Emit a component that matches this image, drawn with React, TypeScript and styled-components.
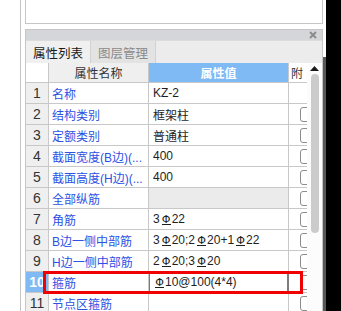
import { createGlobalStyle, styled } from 'styled-components'

const GlobalStyle = createGlobalStyle`
  html, body {
    margin: 0;
    padding: 0;
    background: #ffffff;
  }
  body {
    font-family: "Liberation Sans", "Noto Sans CJK SC", sans-serif;
    font-size: 12px;
  }
`

type Prop = {
  name: string
  value: React.ReactNode
  check?: boolean
  group?: boolean
  selected?: boolean
}

const Page = styled.div`
  display: flex;
  height: 311px;
  overflow: hidden;
  background: #ffffff;
`

const Gutter = styled.div`
  width: 20px;
  flex: none;
  border-right: 1px solid #c4c4c4;
  margin-right: 4px;
`

const Main = styled.div`
  width: 298px;
  flex: none;
  display: flex;
  flex-direction: column;
`

const TopBox = styled.div`
  height: 23px;
  border: 1px solid #c6c6c6;
  border-top: none;
  background: #ffffff;
  margin-bottom: 5px;
`

const Panel = styled.div`
  flex: 1;
  display: flex;
  flex-direction: column;
  border-left: 1px solid #c6c6c6;
  border-right: 1px solid #c6c6c6;
  min-height: 0;
`

const TitleBar = styled.div`
  height: 10px;
  background: #d5d6d9;
  border-top: 1px solid #c6c6c6;
  display: flex;
  justify-content: flex-end;
  align-items: center;
  padding-right: 5px;
`

const Tabs = styled.div`
  height: 22px;
  display: flex;
  background: #ececec;
  border-top: 1px solid #dcdcdc;
`

const Tab = styled.div<{ $active?: boolean }>`
  width: 64px;
  display: flex;
  align-items: center;
  justify-content: center;
  border-right: 1px solid #d2d2d2;
  font-family: "Noto Sans CJK SC", sans-serif;
  font-size: 12.5px;
  background: ${({ $active }) => ($active ? '#f0f0f0' : '#e3e3e3')};
  color: ${({ $active }) => ($active ? '#1a1a1a' : '#8a8a8a')};
`

const Body = styled.div`
  flex: 1;
  display: flex;
  min-height: 0;
`

const Grid = styled.div`
  position: relative;
  width: 281px;
  flex: none;
  overflow: hidden;
`

const Row = styled.div<{ $head?: boolean }>`
  display: grid;
  grid-template-columns: 23px 100px 140px 18px;
  height: ${({ $head }) => ($head ? '20px' : '21px')};
`

const NumCell = styled.div<{ $head?: boolean; $selected?: boolean }>`
  display: flex;
  align-items: center;
  justify-content: center;
  border-right: 1px solid #c8c8c8;
  border-bottom: 1px solid #c8c8c8;
  font-family: "Liberation Sans", sans-serif;
  font-size: 14px;
  background: ${({ $head, $selected }) => ($selected ? '#80baf5' : $head ? '#ffffff' : '#efefef')};
  color: ${({ $selected }) => ($selected ? '#ffffff' : '#333333')};
  font-weight: ${({ $selected }) => ($selected ? 'bold' : 'normal')};
`

const HeadCell = styled.div<{ $blue?: boolean }>`
  display: flex;
  align-items: center;
  justify-content: center;
  border-right: 1px solid #c8c8c8;
  border-bottom: 1px solid #c8c8c8;
  font-family: "Noto Sans CJK SC", sans-serif;
  font-size: 12px;
  background: ${({ $blue }) => ($blue ? '#80baf5' : '#efefef')};
  color: ${({ $blue }) => ($blue ? '#ffffff' : '#333333')};
  font-weight: ${({ $blue }) => ($blue ? 'bold' : 'normal')};
  overflow: hidden;
  white-space: nowrap;
`

const AttachHead = styled(HeadCell)`
  justify-content: flex-start;
  padding-left: 2px;
  border-right: none;
  background: #ffffff;
`

const NameCell = styled.div`
  display: flex;
  align-items: center;
  padding-left: 3px;
  border-right: 1px solid #c8c8c8;
  border-bottom: 1px solid #c8c8c8;
  font-family: "Liberation Sans", "Noto Sans CJK SC", sans-serif;
  font-size: 12px;
  color: #2c52e4;
  white-space: nowrap;
  overflow: hidden;
`

const ValueCell = styled.div<{ $group?: boolean; $focus?: boolean }>`
  display: flex;
  align-items: center;
  padding-left: ${({ $focus }) => ($focus ? '3px' : '4px')};
  border-right: ${({ $focus }) => ($focus ? '2px solid #7c7c7c' : '1px solid #c8c8c8')};
  border-left: ${({ $focus }) => ($focus ? '1px solid #7c7c7c' : 'none')};
  border-bottom: 1px solid #c8c8c8;
  background: ${({ $group }) => ($group ? '#ebebeb' : '#ffffff')};
  font-family: "Liberation Sans", "Noto Sans CJK SC", sans-serif;
  font-size: 12px;
  color: #1e1e1e;
  white-space: nowrap;
  overflow: hidden;
`

const AttachCell = styled.div`
  display: flex;
  align-items: center;
  border-bottom: 1px solid #c8c8c8;
  overflow: hidden;
`

const CheckBox = styled.span`
  flex: none;
  width: 13px;
  height: 13px;
  margin-left: 11px;
  border: 1px solid #8c8c8c;
  border-radius: 3px;
  background: #ffffff;
`

const Rebar = styled.span`
  display: inline-block;
  position: relative;
  width: 9px;
  margin: 0 1px 0 2px;
  text-align: center;
  font-family: "DejaVu Sans", sans-serif;
  font-size: 11px;
  line-height: 11px;
  &::after {
    content: '';
    position: absolute;
    left: 0;
    right: 0;
    bottom: 0;
    height: 1px;
    background: currentColor;
  }
`

const Highlight = styled.div`
  position: absolute;
  left: 17px;
  top: 208px;
  width: 260px;
  height: 23px;
  box-sizing: border-box;
  border: 3px solid #f00000;
  pointer-events: none;
`

const Scrollbar = styled.div`
  flex: 1;
  display: flex;
  flex-direction: column;
  align-items: center;
  background: #fcfcfc;
  padding-top: 3px;
  gap: 3px;
`

const Thumb = styled.div`
  width: 8px;
  height: 159px;
  border-radius: 4px;
  background: #cbcbcb;
`

const Splitter = styled.div`
  width: 3px;
  flex: none;
  display: flex;
  flex-direction: column;
`

const SplitterTop = styled.div`
  height: 57px;
  background: #ffffff;
`

const SplitterBar = styled.div`
  flex: 1;
  background: #575757;
`

const Black = styled.div`
  flex: 1;
  background: #000000;
`

const R = () => <Rebar>Φ</Rebar>

const props: Prop[] = [
  { name: '名称', value: 'KZ-2' },
  { name: '结构类别', value: '框架柱', check: true },
  { name: '定额类别', value: '普通柱', check: true },
  { name: '截面宽度(B边)(...', value: '400', check: true },
  { name: '截面高度(H边)(...', value: '400', check: true },
  { name: '全部纵筋', value: '', check: true, group: true },
  { name: '角筋', value: <>3<R />22</>, check: true },
  { name: 'B边一侧中部筋', value: <>3<R />20;2<R />20+1<R />22</>, check: true },
  { name: 'H边一侧中部筋', value: <>2<R />20;3<R />20</>, check: true },
  { name: '箍筋', value: <><R />10@100(4*4)</>, check: true, selected: true },
  { name: '节点区箍筋', value: '', check: true },
]

export default function App() {
  return (
    <>
      <GlobalStyle />
      <Page>
        <Gutter />
        <Main>
          <TopBox />
          <Panel>
            <TitleBar>
              <svg width="8" height="8" viewBox="0 0 8 8">
                <path d="M1 1 L7 7 M7 1 L1 7" stroke="#8a8a8a" strokeWidth="1.8" />
              </svg>
            </TitleBar>
            <Tabs>
              <Tab $active>属性列表</Tab>
              <Tab>图层管理</Tab>
            </Tabs>
            <Body>
              <Grid>
                <Row $head>
                  <NumCell $head />
                  <HeadCell>属性名称</HeadCell>
                  <HeadCell $blue>属性值</HeadCell>
                  <AttachHead>附</AttachHead>
                </Row>
                {props.map((p, i) => (
                  <Row key={i}>
                    <NumCell $selected={p.selected}>{i + 1}</NumCell>
                    <NameCell>{p.name}</NameCell>
                    <ValueCell $group={p.group} $focus={p.selected}>
                      {p.value}
                    </ValueCell>
                    <AttachCell>{p.check && <CheckBox />}</AttachCell>
                  </Row>
                ))}
                <Highlight />
              </Grid>
              <Scrollbar>
                <svg width="9" height="5" viewBox="0 0 9 5">
                  <path d="M4.5 0 L9 5 L0 5 Z" fill="#1a1a1a" />
                </svg>
                <Thumb />
              </Scrollbar>
            </Body>
          </Panel>
        </Main>
        <Splitter>
          <SplitterTop />
          <SplitterBar />
        </Splitter>
        <Black />
      </Page>
    </>
  )
}
